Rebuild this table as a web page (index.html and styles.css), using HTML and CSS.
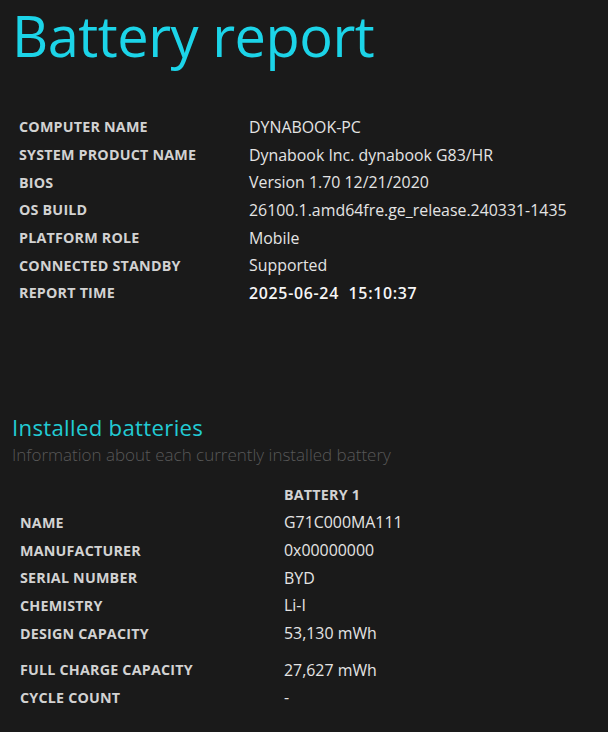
FILE: index.html
```html
<!DOCTYPE html>
<html>
<head>
<meta charset="utf-8">
<link rel="stylesheet" href="styles.css">
</head>
<body>
<h1 class="title">Battery report</h1>
<table class="info">
  <tr><td class="label">Computer name</td><td class="value">DYNABOOK-PC</td></tr>
  <tr><td class="label">System product name</td><td class="value">Dynabook Inc. dynabook G83/HR</td></tr>
  <tr><td class="label">BIOS</td><td class="value">Version 1.70 12/21/2020</td></tr>
  <tr><td class="label">OS build</td><td class="value">26100.1.amd64fre.ge_release.240331-1435</td></tr>
  <tr><td class="label">Platform role</td><td class="value">Mobile</td></tr>
  <tr><td class="label">Connected standby</td><td class="value">Supported</td></tr>
  <tr><td class="label">Report time</td><td class="value strong">2025-06-24&nbsp;&nbsp;15:10:37</td></tr>
</table>
<h2 class="section">Installed batteries</h2>
<div class="explanation">Information about each currently installed battery</div>
<table class="batteries">
  <tr class="head"><td></td><td class="label">Battery 1</td></tr>
  <tr><td class="label">Name</td><td class="value">G71C000MA111</td></tr>
  <tr><td class="label">Manufacturer</td><td class="value">0x00000000</td></tr>
  <tr><td class="label">Serial number</td><td class="value">BYD</td></tr>
  <tr><td class="label">Chemistry</td><td class="value">Li-I</td></tr>
  <tr><td class="label">Design Capacity</td><td class="value">53,130 mWh</td></tr>
  <tr class="spacer"><td colspan="2"></td></tr>
  <tr><td class="label">Full Charge Capacity</td><td class="value">27,627 mWh</td></tr>
  <tr><td class="label">Cycle Count</td><td class="value">-</td></tr>
</table>
</body>
</html>
```
FILE: styles.css
```css
html, body {
  margin: 0;
  padding: 0;
  background: #1a1a1a;
}
body {
  font-family: "Open Sans", "Noto Sans", sans-serif;
  color: #e6e6e6;
  padding-left: 12px;
}
.title {
  margin: 0;
  padding-top: 0;
  font-size: 56px;
  line-height: 70px;
  font-weight: 400;
  color: #1cd4e8;
  letter-spacing: -0.5px;
}
.info {
  border-collapse: collapse;
  margin-top: 43px;
  margin-left: 7px;
}
.info td, .batteries td {
  padding: 0;
  height: 27.7px;
  vertical-align: middle;
}
.info .label {
  width: 230px;
}
.label {
  font-weight: 700;
  text-transform: uppercase;
  font-size: 14.3px;
  color: #d2d2d2;
  letter-spacing: 0.2px;
}
.value {
  font-size: 15.9px;
  font-weight: 400;
  color: #e4e4e4;
  white-space: nowrap;
}
.value.strong {
  font-weight: 600;
  color: #f6f6f6;
  letter-spacing: 0.7px;
}
.section {
  margin: 108px 0 0 0;
  font-size: 22.2px;
  line-height: 26px;
  font-weight: 500;
  color: #22cbd4;
  letter-spacing: 0.3px;
}
.explanation {
  margin-top: 3px;
  font-size: 17px;
  line-height: 22px;
  font-weight: 300;
  color: #585858;
}
.batteries {
  border-collapse: collapse;
  margin-top: 15px;
  margin-left: 8px;
}
.batteries td:first-child {
  width: 264px;
}
.batteries .spacer td {
  height: 9px;
}
```
